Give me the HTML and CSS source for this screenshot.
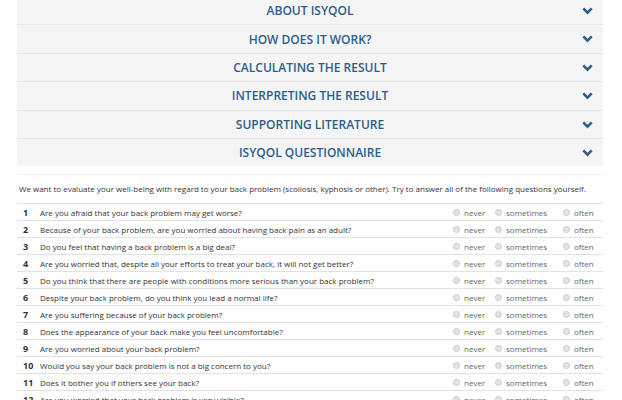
FILE: index.html
```html
<!DOCTYPE html>
<html lang="en">
<head>
  <meta charset="UTF-8">
  <title>ISYQOL</title>
  <link rel="stylesheet" href="styles.css">
</head>
<body>
  <div class="page">
    <div class="accordion">
      <div class="acc-item"><span class="acc-title">ABOUT ISYQOL</span><svg class="chev" width="11" height="8" viewBox="0 0 11 8"><path d="M1.3 1.4 L5.5 5.6 L9.7 1.4"/></svg></div>
      <div class="acc-item"><span class="acc-title">HOW DOES IT WORK?</span><svg class="chev" width="11" height="8" viewBox="0 0 11 8"><path d="M1.3 1.4 L5.5 5.6 L9.7 1.4"/></svg></div>
      <div class="acc-item"><span class="acc-title">CALCULATING THE RESULT</span><svg class="chev" width="11" height="8" viewBox="0 0 11 8"><path d="M1.3 1.4 L5.5 5.6 L9.7 1.4"/></svg></div>
      <div class="acc-item"><span class="acc-title">INTERPRETING THE RESULT</span><svg class="chev" width="11" height="8" viewBox="0 0 11 8"><path d="M1.3 1.4 L5.5 5.6 L9.7 1.4"/></svg></div>
      <div class="acc-item"><span class="acc-title">SUPPORTING LITERATURE</span><svg class="chev" width="11" height="8" viewBox="0 0 11 8"><path d="M1.3 1.4 L5.5 5.6 L9.7 1.4"/></svg></div>
      <div class="acc-item"><span class="acc-title">ISYQOL QUESTIONNAIRE</span><svg class="chev" width="11" height="8" viewBox="0 0 11 8"><path d="M1.3 1.4 L5.5 5.6 L9.7 1.4"/></svg></div>
    </div>

    <div class="divider"></div>

    <p class="intro">We want to evaluate your well-being with regard to your back problem (scoliosis, kyphosis or other). Try to answer all of the following questions yourself.</p>

    <div class="questions" id="questions"></div>
  </div>
  <script>
    var questions = [
      'Are you afraid that your back problem may get worse?',
      'Because of your back problem, are you worried about having back pain as an adult?',
      'Do you feel that having a back problem is a big deal?',
      'Are you worried that, despite all your efforts to treat your back, it will not get better?',
      'Do you think that there are people with conditions more serious than your back problem?',
      'Despite your back problem, do you think you lead a normal life?',
      'Are you suffering because of your back problem?',
      'Does the appearance of your back make you feel uncomfortable?',
      'Are you worried about your back problem?',
      'Would you say your back problem is not a big concern to you?',
      'Does it bother you if others see your back?',
      'Are you worried that your back problem is very visible?'
    ];
    var answers = ['never', 'sometimes', 'often'];
    var box = document.getElementById('questions');
    for (var i = 0; i < questions.length; i++) {
      var row = document.createElement('div');
      row.className = 'q-row';
      var html = '<span class="q-num">' + (i + 1) + '</span><span class="q-text">' + questions[i] + '</span>';
      for (var j = 0; j < answers.length; j++) {
        html += '<label class="q-opt"><span class="radio"></span>' + answers[j] + '</label>';
      }
      row.innerHTML = html;
      box.appendChild(row);
    }
  </script>
</body>
</html>
```

FILE: styles.css
```css
html,
body {
  margin: 0;
  padding: 0;
}

body {
  font-family: "Open Sans", "Liberation Sans", sans-serif;
  color: #333;
  background: #fff;
  overflow: hidden;
}

.page {
  padding: 0 19px 0 17px;
  margin-top: -3px;
}

.accordion {
  background-color: #f5f5f5;
}

.acc-item {
  position: relative;
  height: 27.4px;
  border-bottom: 1px solid #e6e6e6;
  display: flex;
  align-items: center;
  justify-content: center;
}

.acc-item:last-child {
  border-bottom: none;
}

.acc-title {
  font-size: 12px;
  font-weight: 600;
  color: #2d5d89;
}

.chev {
  position: absolute;
  right: 10px;
  top: 10px;
}

.chev path {
  fill: none;
  stroke: #2d5d89;
  stroke-width: 2.6;
}

.divider {
  height: 1px;
  background-color: #f1f1f1;
  margin-top: 8px;
}

.intro {
  margin: 0;
  padding: 8px 0 8px 2px;
  font-size: 8px;
  line-height: 12px;
  color: #333;
  white-space: nowrap;
}

.questions {
  border-top: 1px solid #e2e2e2;
}

.q-row {
  display: grid;
  grid-template-columns: 23px 1fr 42px 68px 40px;
  align-items: center;
  height: 16px;
  border-bottom: 1px solid #e2e2e2;
  font-size: 8px;
}

.q-num {
  padding-left: 6px;
  font-weight: 700;
  font-size: 9px;
  color: #333;
}

.q-text {
  color: #333;
  white-space: nowrap;
}

.q-opt {
  display: flex;
  align-items: center;
  color: #666;
}

.radio {
  display: inline-block;
  width: 5px;
  height: 5px;
  border-radius: 50%;
  border: 1px solid #cacaca;
  background-color: #e4e4e4;
  margin-right: 4px;
}
```
